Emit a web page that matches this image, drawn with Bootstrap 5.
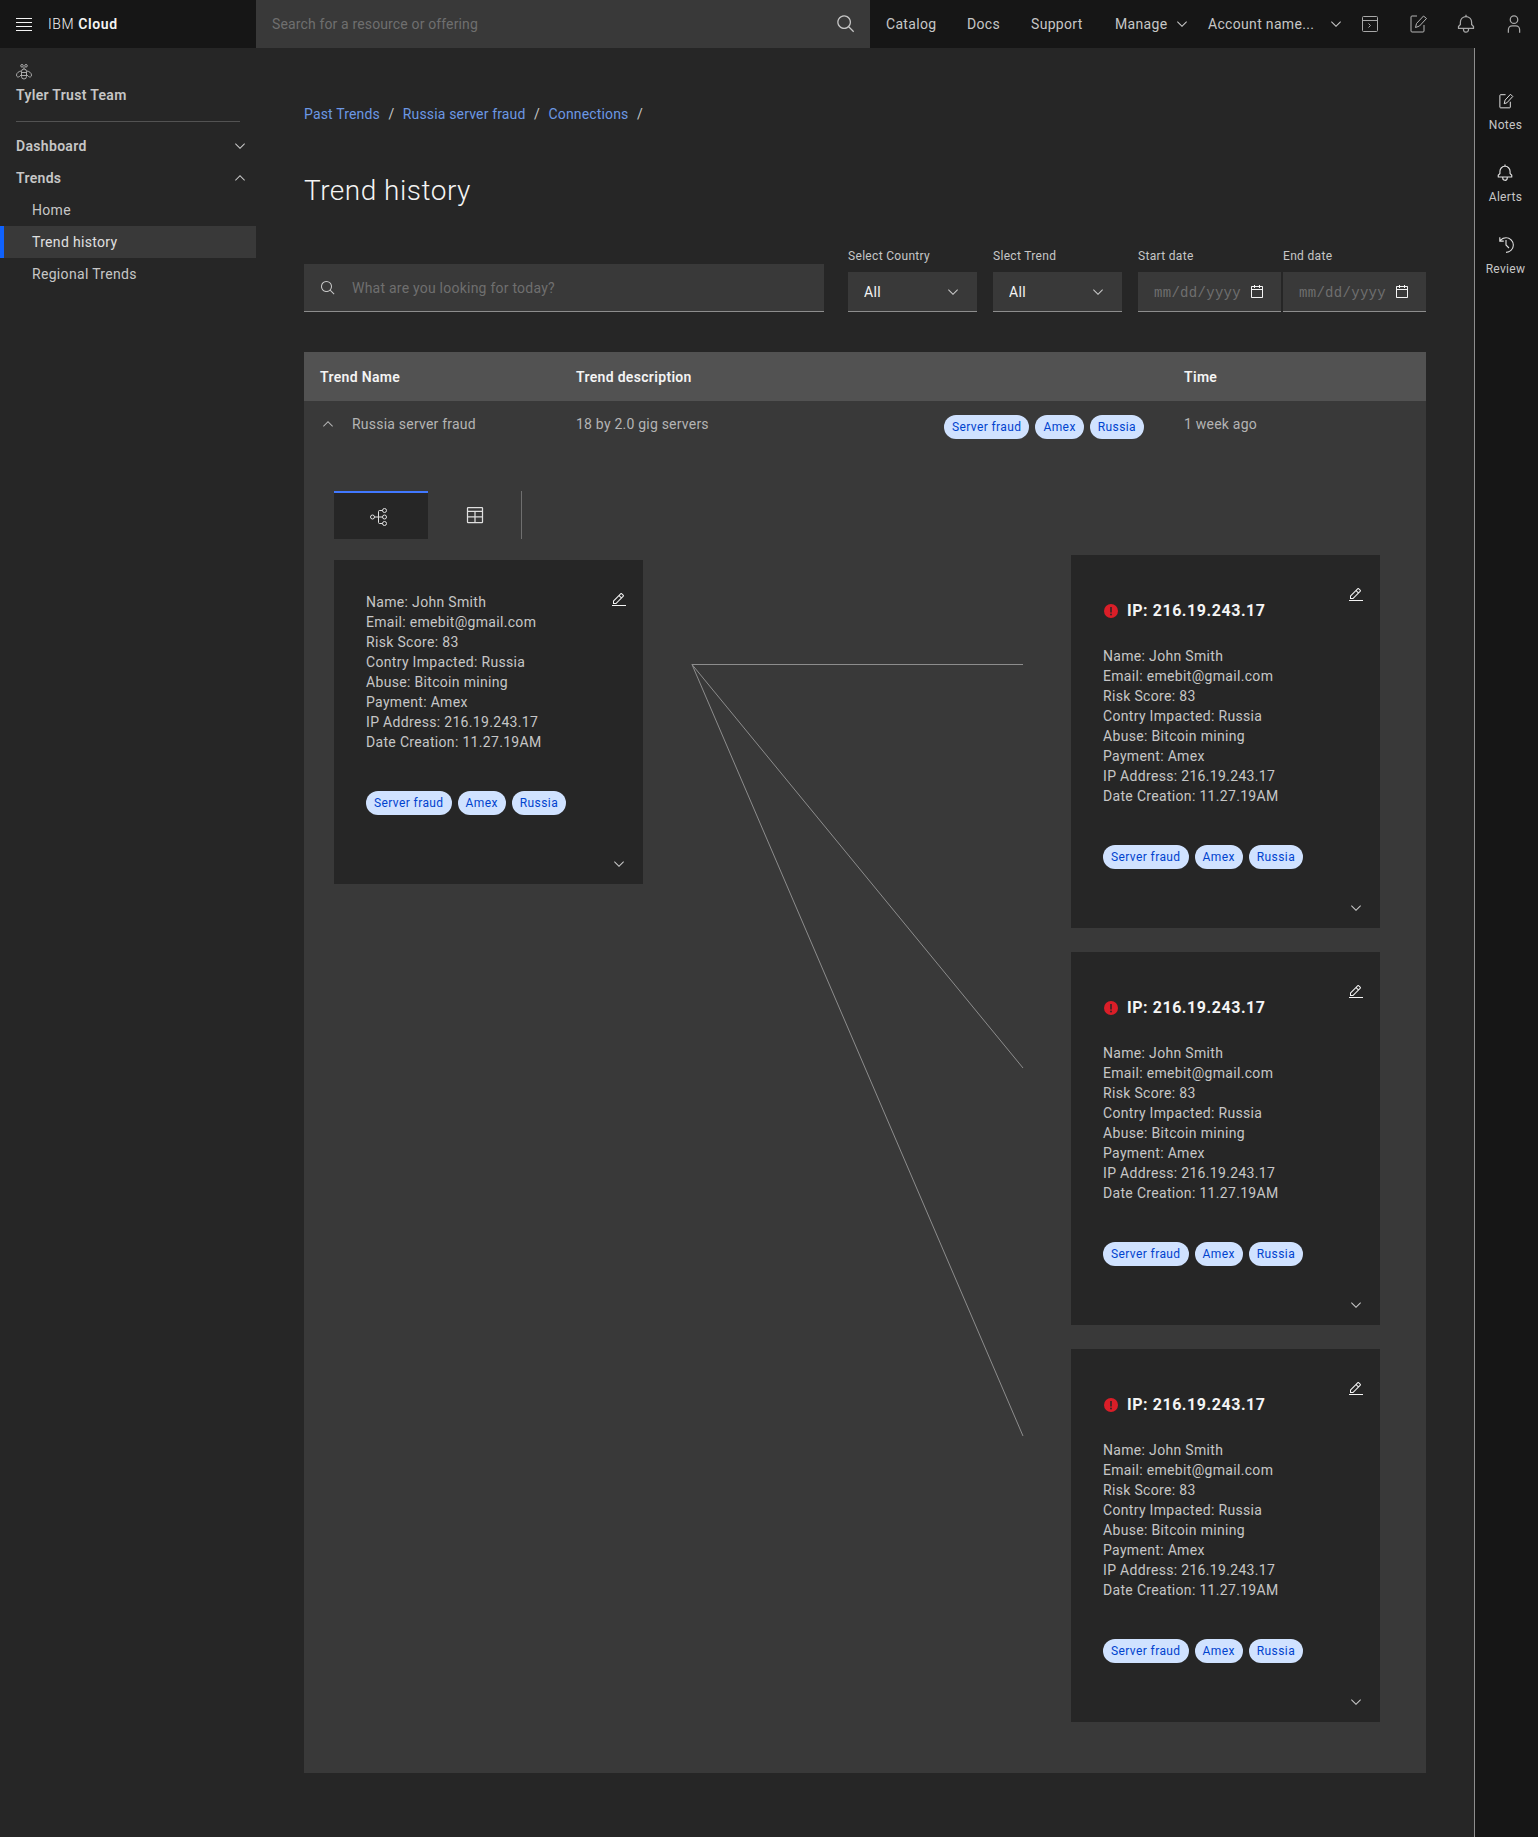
<!doctype html>
<html lang="en" data-bs-theme="dark">
<head>
<meta charset="utf-8">
<title>Trend history</title>
<link href="https://cdn.jsdelivr.net/npm/bootstrap@5.3.0/dist/css/bootstrap.min.css" rel="stylesheet">
<style>
:root{--pf:"Roboto","Liberation Sans",sans-serif;}
html,body{height:100%}
body{background:#262626;color:#c6c6c6;font-family:var(--pf);font-size:14px;line-height:20px;letter-spacing:.32px;width:1538px;min-height:1837px;}
svg.ic{fill:currentColor;display:block;flex:none}
svg.ic.ln{fill:none}
.topbar{height:48px;background:#161616;}
.brandbox{width:256px;padding-left:16px;color:#f4f4f4}
.brandbox b{font-weight:600}
.brandname{margin-left:16px;font-weight:300;letter-spacing:.6px}
.topsearch{width:614px;background:#393939;color:#6f6f6f;padding:0 14px 0 16px;letter-spacing:.14px}
.topsearch svg{color:#c6c6c6}
.toplinks{color:#c6c6c6;height:48px}
.navgrp{width:668px;position:relative;height:48px}
.navgrp>*{position:absolute;top:14px}
.shell{min-height:1789px}
.sidemenu{width:256px;flex:none;padding-top:16px}
.teamicon{margin-left:16px;color:#c6c6c6}
.teamname{margin:4px 0 0 16px;font-weight:600;height:37px;color:#c6c6c6;line-height:22px}
.siderule{margin:0 16px 8px;border-top:1px solid #525252;opacity:1}
.sideitem{height:32px;padding:0 16px;font-weight:600;color:#c6c6c6}
.subitem{height:32px;padding-left:32px;color:#c6c6c6}
.subitem.on{background:#393939;border-left:4px solid #0f62fe;padding-left:28px;color:#e0e0e0}
.mainarea{flex:1;padding:56px 48px 0;min-width:0}
.crumbs{--bs-breadcrumb-margin-bottom:0;--bs-breadcrumb-item-padding-x:8.5px;height:20px;letter-spacing:.16px}
.crumbs .breadcrumb-item+.breadcrumb-item::before{color:#c6c6c6}
.crumbs a{color:#6c98e4;text-decoration:none}
.pagetitle{font-size:28px;font-weight:300;line-height:36px;color:#f4f4f4;margin:49px 0 0;letter-spacing:.5px}
.filters{margin-top:39px;height:64px}
.findbox{width:520px;flex:none;height:48px;background:#393939;border-bottom:1px solid #8d8d8d;padding-left:16px;color:#c6c6c6;margin-right:24px}
.findbox input,.datebox input{background:transparent;border:0;outline:0;color:#c6c6c6;padding:0;width:100%;min-width:0}
.findbox input{letter-spacing:.23px}
.findbox input::placeholder{color:#6f6f6f}
.fieldgrp{display:flex;flex-direction:column;justify-content:flex-end;flex:none}
.fieldlabel{font-size:12px;line-height:16px;margin-bottom:8px;color:#c6c6c6;letter-spacing:.32px}
.fieldsel{height:40px;border:0;border-bottom:1px solid #8d8d8d;border-radius:0;background-color:#393939;color:#f4f4f4;font-size:14px;padding:2px 16px 0;letter-spacing:.32px;
 background-image:url("data:image/svg+xml,%3Csvg xmlns='http://www.w3.org/2000/svg' viewBox='0 0 32 32'%3E%3Cpath fill='%23c6c6c6' d='M16 22L6 12 7.4 10.6 16 19.2 24.6 10.6 26 12z'/%3E%3C/svg%3E");background-size:16px 16px;background-position:right 16px center}
.datebox{height:40px;background:#393939;border-bottom:1px solid #8d8d8d;padding:0 16px;color:#f4f4f4}
.datebox input{font-family:"Liberation Mono",monospace;font-size:14px;letter-spacing:.3px;padding-top:2px}
.datebox input::placeholder{color:#6f6f6f}
.trendtable{margin-top:40px;background:#393939;padding-bottom:51px}
.rowhead{height:49px;background:#525252;color:#f4f4f4;font-weight:600;position:relative}
.cola{width:272px;flex:none;padding-left:16px}
.colb{flex:none;width:608px}
.trendrow{height:90px;padding-top:13px;color:#b4b4b4;align-items:flex-start;letter-spacing:.22px}
.trendrow .cola,.trendrow .colb{display:flex;align-items:center;height:20px}
.pilla{display:inline-flex;align-items:center;height:24px;padding:0 8px;border-radius:12px;background:#d0e2ff;color:#0043ce;font-size:12px;line-height:16px;letter-spacing:.4px;font-weight:400}
.pillset{gap:6px}
.tabstrip{margin-left:30px;height:48px}
.tabon{width:94px;height:48px;background:#262626;border-top:2px solid #4178ff;color:#e0e0e0}
.tabon svg{margin:2px 5px 0 0}
.taboff{width:94px;height:48px;color:#e0e0e0;border-right:1px solid #6f6f6f}
.diagram{position:relative;padding:16px 46px 0 30px}
.linkarrows{position:absolute;left:0;top:0;width:100%;height:100%;pointer-events:none}
.personcard{width:309px;background:#262626;padding:32px 32px 0;position:relative;color:#c6c6c6;line-height:20px}
.personcard.leftcard{margin-top:5px;height:324px}
.personcard.ipcard{height:373px;margin-bottom:24px;padding-top:45px}
.personcard.ipcard:last-child{margin-bottom:0}
.editbtn{position:absolute;right:16px;color:#f4f4f4;top:32px}
.morebtn{position:absolute;right:16px;bottom:12px;color:#c6c6c6}
.ipline{font-size:16px;font-weight:700;color:#f4f4f4;line-height:22px;gap:9px;margin-bottom:24px;margin-left:1px;letter-spacing:.55px}
.factlines{margin-bottom:39px}
.factlines div{height:20px;white-space:nowrap}
.rightrail{width:64px;flex:none;background:#161616;border-left:1px solid #8d8d8d;position:relative;padding:44px 2px 0 0;color:#c6c6c6}
.railitem{height:72px;font-size:12px;line-height:16px;letter-spacing:.32px}
.railitem svg{margin-bottom:7px;color:#e0e0e0}
</style>
</head>
<body>
<header class="topbar d-flex align-items-stretch">
  <div class="brandbox d-flex align-items-center">
    <svg class="ic ln" width="16" height="16" viewBox="0 0 16 16" stroke="currentColor"><path d="M0 2.500h16M0 6.500h16M0 10.500h16M0 14.500h16"/></svg>
    <span class="brandname">IBM <b>Cloud</b></span>
  </div>
  <div class="topsearch d-flex align-items-center justify-content-between">
    <span>Search for a resource or offering</span>
    <svg class="ic" width="20" height="20" viewBox="0 0 32 32"><path d="M29 27.5859l-7.5521-7.5521a11.0177 11.0177 0 10-1.4141 1.4141L27.5859 29zM4 13a9 9 0 119 9A9.01 9.01 0 014 13z"/></svg>
  </div>
  <nav class="navgrp toplinks">
    <span style="left:16px">Catalog</span>
    <span style="left:97px">Docs</span>
    <span style="left:161px">Support</span>
    <span style="left:245px">Manage</span>
    <svg class="ic" style="left:304px;top:16px" width="16" height="16" viewBox="0 0 32 32"><path d="M16 22L6 12 7.4 10.6 16 19.2 24.6 10.6 26 12z"/></svg>
    <span style="left:338px">Account name...</span>
    <svg class="ic" style="left:458px;top:16px" width="16" height="16" viewBox="0 0 32 32"><path d="M16 22L6 12 7.4 10.6 16 19.2 24.6 10.6 26 12z"/></svg>
    <svg class="ic ln" style="left:490px;top:14px;color:#a8a8a8" width="20" height="20" viewBox="0 0 20 20" stroke="currentColor"><rect x="2.500" y="2.500" width="15" height="15" rx="1"/><path d="M2.500 6.500h15M8.500 9.500l2 2-2 2"/></svg>
    <svg class="ic ln" style="left:538px;top:14px;color:#b4b4b4" width="20" height="20" viewBox="0 0 20 20" stroke="currentColor"><path d="M9 2H4a1 1 0 00-1 1v14a1 1 0 001 1h11a1 1 0 001-1v-6"/><path d="M7.500 13.500l1-4 7-7.500 3 2.500-7 7.500z"/></svg>
    <svg class="ic" style="left:586px;top:14px;color:#a8a8a8" width="20" height="20" viewBox="0 0 32 32"><path d="M28.7071,19.293,26,16.5859V13a10.0136,10.0136,0,0,0-9-9.9492V1H15V3.0508A10.0136,10.0136,0,0,0,6,13v3.5859L3.2929,19.293A1,1,0,0,0,3,20v3a1,1,0,0,0,1,1h7v.7768a5.152,5.152,0,0,0,4.5,5.1987A5.0057,5.0057,0,0,0,21,25V24h7a1,1,0,0,0,1-1V20A1,1,0,0,0,28.7071,19.293ZM19,25a3,3,0,0,1-6,0V24h6Zm8-3H5V20.4141L7.707,17.707A1,1,0,0,0,8,17V13a8,8,0,0,1,16,0v4a1,1,0,0,0,.293.707L27,20.4141Z"/></svg>
    <svg class="ic" style="left:634px;top:14px;color:#a8a8a8" width="20" height="20" viewBox="0 0 32 32"><path d="M16 4a5 5 0 11-5 5 5 5 0 015-5m0-2a7 7 0 107 7A7 7 0 0016 2zM26 30H24V25a5 5 0 00-5-5H13a5 5 0 00-5 5v5H6V25a7 7 0 017-7h6a7 7 0 017 7z"/></svg>
  </nav>
</header>
<div class="shell d-flex">
  <aside class="sidemenu">
    <svg class="ic ln teamicon" width="16" height="16" viewBox="0 0 16 16" stroke="currentColor" stroke-width=".8"><circle cx="6" cy="1.800" r="1.300"/><circle cx="10" cy="1.800" r="1.300"/><rect x="5.500" y="5" width="5" height="10" rx="2.500"/><path d="M5.500 8.500h5M5.500 11.500h5M8 3v2"/><path d="M5.500 7C3 7 .5 9 .5 11s1.500 2.500 3 1.500l2-2M10.500 7c2.500 0 5 2 5 4s-1.500 2.500-3 1.500l-2-2"/></svg>
    <div class="teamname">Tyler Trust Team</div>
    <hr class="siderule">
    <div class="sideitem d-flex align-items-center justify-content-between"><span>Dashboard</span><svg class="ic" width="16" height="16" viewBox="0 0 32 32" style="margin-right:-8px"><path d="M16 22L6 12 7.4 10.6 16 19.2 24.6 10.6 26 12z"/></svg></div>
    <div class="sideitem d-flex align-items-center justify-content-between"><span>Trends</span><svg class="ic" width="16" height="16" viewBox="0 0 32 32" style="margin-right:-8px"><path d="M16 10L26 20 24.6 21.4 16 12.800 7.400 21.400 6 20z"/></svg></div>
    <div class="subitem d-flex align-items-center">Home</div>
    <div class="subitem on d-flex align-items-center">Trend history</div>
    <div class="subitem d-flex align-items-center">Regional Trends</div>
  </aside>
  <main class="mainarea">
    <nav aria-label="breadcrumb">
      <ol class="breadcrumb crumbs">
        <li class="breadcrumb-item"><a href="#">Past Trends</a></li>
        <li class="breadcrumb-item"><a href="#">Russia server fraud</a></li>
        <li class="breadcrumb-item"><a href="#">Connections</a></li>
        <li class="breadcrumb-item"></li>
      </ol>
    </nav>
    <h1 class="pagetitle">Trend history</h1>
    <div class="filters d-flex align-items-end">
      <div class="findbox d-flex align-items-center gap-2">
        <svg class="ic" width="16" height="16" viewBox="0 0 32 32"><path d="M29 27.5859l-7.5521-7.5521a11.0177 11.0177 0 10-1.4141 1.4141L27.5859 29zM4 13a9 9 0 119 9A9.01 9.01 0 014 13z"/></svg>
        <input type="text" placeholder="What are you looking for today?" style="margin-left:8px">
      </div>
      <div class="fieldgrp" style="width:129px"><label class="fieldlabel">Select Country</label><select class="form-select fieldsel"><option>All</option></select></div>
      <div class="fieldgrp" style="width:129px;margin-left:16px"><label class="fieldlabel">Slect Trend</label><select class="form-select fieldsel"><option>All</option></select></div>
      <div class="fieldgrp" style="width:143px;margin-left:16px"><label class="fieldlabel">Start date</label><div class="datebox d-flex align-items-center"><input type="text" placeholder="mm/dd/yyyy"><svg class="ic" width="16" height="16" viewBox="0 0 32 32"><path d="M26,4h-4V2h-2v2h-8V2h-2v2H6C4.900,4,4,4.900,4,6v20c0,1.100,0.900,2,2,2h20c1.100,0,2-0.900,2-2V6C28,4.900,27.100,4,26,4z M26,26H6V12h20V26z M26,10H6V6h4v2h2V6h8v2h2V6h4V10z"/></svg></div></div>
      <div class="fieldgrp" style="width:143px;margin-left:2px"><label class="fieldlabel">End date</label><div class="datebox d-flex align-items-center"><input type="text" placeholder="mm/dd/yyyy"><svg class="ic" width="16" height="16" viewBox="0 0 32 32"><path d="M26,4h-4V2h-2v2h-8V2h-2v2H6C4.900,4,4,4.900,4,6v20c0,1.100,0.900,2,2,2h20c1.100,0,2-0.900,2-2V6C28,4.900,27.100,4,26,4z M26,26H6V12h20V26z M26,10H6V6h4v2h2V6h8v2h2V6h4V10z"/></svg></div></div>
    </div>
    <section class="trendtable">
      <div class="rowhead d-flex align-items-center">
        <div class="cola">Trend Name</div>
        <div class="colb">Trend description</div>
        <div>Time</div>
      </div>
      <div class="trendrow d-flex">
        <div class="cola"><svg class="ic" width="16" height="16" viewBox="0 0 32 32" style="margin-right:16px"><path d="M16 10L26 20 24.600 21.400 16 12.800 7.400 21.400 6 20z"/></svg>Russia server fraud</div>
        <div class="colb justify-content-between"><span>18 by 2.0 gig servers</span><span class="d-flex pillset" style="margin-right:40px;margin-top:6px"><span class="pilla">Server fraud</span><span class="pilla">Amex</span><span class="pilla">Russia</span></span></div>
        <div>1 week ago</div>
      </div>
      <div class="tabstrip d-flex">
        <div class="tabon d-flex align-items-center justify-content-center">
          <svg class="ic ln" width="20" height="20" viewBox="0 0 20 20" stroke="currentColor"><circle cx="3.500" cy="10" r="2"/><circle cx="15.500" cy="3.500" r="2"/><circle cx="15.500" cy="10" r="2"/><circle cx="15.500" cy="16.500" r="2"/><path d="M5.500 10h8M9.500 10V4.500c0-.6.400-1 1-1h3M9.500 10v5.500c0 .6.400 1 1 1h3"/></svg>
        </div>
        <div class="taboff d-flex align-items-center justify-content-center">
          <svg class="ic" width="20" height="20" viewBox="0 0 32 32"><path d="M27,3H5A2,2,0,0,0,3,5V27a2,2,0,0,0,2,2H27a2,2,0,0,0,2-2V5A2,2,0,0,0,27,3Zm0,2V9H5V5ZM17,11H27v7H17Zm-2,7H5V11H15ZM5,20H15v7H5Zm12,7V20H27v7Z"/></svg>
        </div>
      </div>
      <div class="diagram d-flex justify-content-between align-items-start">
        <svg class="linkarrows" viewBox="0 0 1122 1183" preserveAspectRatio="none" fill="none" stroke="#8d8d8d" stroke-width="1"><path d="M388 125.500H719M388 125.500L719 529M388 125.500L719 897"/></svg>
        <article class="personcard leftcard">
          <svg class="ic editbtn" width="16" height="16" viewBox="0 0 32 32"><path d="M2 26H30V28H2zM25.400 9c.8-.8.8-2 0-2.800l-3.600-3.600c-.8-.8-2-.8-2.800 0l-15 15V24h6.400L25.400 9zM20.400 4L24 7.600l-3 3L17.400 7 20.400 4zM6 22v-3.600l10-10 3.600 3.600-10 10H6z"/></svg>
          <div class="factlines">
            <div>Name: John Smith</div><div>Email: emebit@gmail.com</div><div>Risk Score: 83</div><div>Contry Impacted: Russia</div><div>Abuse: Bitcoin mining</div><div>Payment: Amex</div><div>IP Address: 216.19.243.17</div><div>Date Creation: 11.27.19AM</div>
          </div>
          <div class="d-flex pillset"><span class="pilla">Server fraud</span><span class="pilla">Amex</span><span class="pilla">Russia</span></div>
          <svg class="ic morebtn" width="16" height="16" viewBox="0 0 32 32"><path d="M16 22L6 12 7.400 10.600 16 19.200 24.600 10.600 26 12z"/></svg>
        </article>
        <div class="ipstack">
          <article class="personcard ipcard">
            <svg class="ic editbtn" width="16" height="16" viewBox="0 0 32 32"><path d="M2 26H30V28H2zM25.400 9c.8-.8.8-2 0-2.800l-3.600-3.600c-.8-.8-2-.8-2.800 0l-15 15V24h6.400L25.400 9zM20.400 4L24 7.600l-3 3L17.400 7 20.400 4zM6 22v-3.600l10-10 3.600 3.600-10 10H6z"/></svg>
            <div class="ipline d-flex align-items-center"><svg class="ic" width="14" height="14" viewBox="2 2 28 28"><circle cx="16" cy="16" r="14" fill="#da1e28"/><rect x="14.500" y="8" width="3" height="11" fill="#262626"/><circle cx="16" cy="23" r="1.800" fill="#262626"/></svg><span>IP: 216.19.243.17</span></div>
            <div class="factlines">
              <div>Name: John Smith</div><div>Email: emebit@gmail.com</div><div>Risk Score: 83</div><div>Contry Impacted: Russia</div><div>Abuse: Bitcoin mining</div><div>Payment: Amex</div><div>IP Address: 216.19.243.17</div><div>Date Creation: 11.27.19AM</div>
            </div>
            <div class="d-flex pillset"><span class="pilla">Server fraud</span><span class="pilla">Amex</span><span class="pilla">Russia</span></div>
            <svg class="ic morebtn" width="16" height="16" viewBox="0 0 32 32"><path d="M16 22L6 12 7.400 10.600 16 19.200 24.600 10.600 26 12z"/></svg>
          </article>
          <article class="personcard ipcard">
            <svg class="ic editbtn" width="16" height="16" viewBox="0 0 32 32"><path d="M2 26H30V28H2zM25.400 9c.8-.8.8-2 0-2.800l-3.600-3.600c-.8-.8-2-.8-2.800 0l-15 15V24h6.400L25.400 9zM20.400 4L24 7.600l-3 3L17.400 7 20.400 4zM6 22v-3.600l10-10 3.600 3.600-10 10H6z"/></svg>
            <div class="ipline d-flex align-items-center"><svg class="ic" width="14" height="14" viewBox="2 2 28 28"><circle cx="16" cy="16" r="14" fill="#da1e28"/><rect x="14.500" y="8" width="3" height="11" fill="#262626"/><circle cx="16" cy="23" r="1.800" fill="#262626"/></svg><span>IP: 216.19.243.17</span></div>
            <div class="factlines">
              <div>Name: John Smith</div><div>Email: emebit@gmail.com</div><div>Risk Score: 83</div><div>Contry Impacted: Russia</div><div>Abuse: Bitcoin mining</div><div>Payment: Amex</div><div>IP Address: 216.19.243.17</div><div>Date Creation: 11.27.19AM</div>
            </div>
            <div class="d-flex pillset"><span class="pilla">Server fraud</span><span class="pilla">Amex</span><span class="pilla">Russia</span></div>
            <svg class="ic morebtn" width="16" height="16" viewBox="0 0 32 32"><path d="M16 22L6 12 7.400 10.600 16 19.200 24.600 10.600 26 12z"/></svg>
          </article>
          <article class="personcard ipcard">
            <svg class="ic editbtn" width="16" height="16" viewBox="0 0 32 32"><path d="M2 26H30V28H2zM25.400 9c.8-.8.8-2 0-2.800l-3.600-3.600c-.8-.8-2-.8-2.800 0l-15 15V24h6.400L25.400 9zM20.400 4L24 7.600l-3 3L17.400 7 20.400 4zM6 22v-3.600l10-10 3.600 3.600-10 10H6z"/></svg>
            <div class="ipline d-flex align-items-center"><svg class="ic" width="14" height="14" viewBox="2 2 28 28"><circle cx="16" cy="16" r="14" fill="#da1e28"/><rect x="14.500" y="8" width="3" height="11" fill="#262626"/><circle cx="16" cy="23" r="1.800" fill="#262626"/></svg><span>IP: 216.19.243.17</span></div>
            <div class="factlines">
              <div>Name: John Smith</div><div>Email: emebit@gmail.com</div><div>Risk Score: 83</div><div>Contry Impacted: Russia</div><div>Abuse: Bitcoin mining</div><div>Payment: Amex</div><div>IP Address: 216.19.243.17</div><div>Date Creation: 11.27.19AM</div>
            </div>
            <div class="d-flex pillset"><span class="pilla">Server fraud</span><span class="pilla">Amex</span><span class="pilla">Russia</span></div>
            <svg class="ic morebtn" width="16" height="16" viewBox="0 0 32 32"><path d="M16 22L6 12 7.400 10.600 16 19.200 24.600 10.600 26 12z"/></svg>
          </article>
        </div>
      </div>
    </section>
  </main>
  <aside class="rightrail d-flex flex-column align-items-center">
    <div class="railitem d-flex flex-column align-items-center"><svg class="ic ln" width="18" height="18" viewBox="0 0 20 20" stroke="currentColor" stroke-width="1.100"><path d="M9.500 3H4a.8.8 0 00-.8.800v13a.8.8 0 00.800.800h10a.8.8 0 00.800-.800v-6"/><path d="M8 13l1-4 6-6.500 2.500 2.500L11 12z"/></svg>Notes</div>
    <div class="railitem d-flex flex-column align-items-center"><svg class="ic" width="18" height="18" viewBox="0 0 32 32"><path d="M28.7071,19.293,26,16.5859V13a10.0136,10.0136,0,0,0-9-9.9492V1H15V3.0508A10.0136,10.0136,0,0,0,6,13v3.5859L3.2929,19.293A1,1,0,0,0,3,20v3a1,1,0,0,0,1,1h7v.7768a5.152,5.152,0,0,0,4.5,5.1987A5.0057,5.0057,0,0,0,21,25V24h7a1,1,0,0,0,1-1V20A1,1,0,0,0,28.7071,19.293ZM19,25a3,3,0,0,1-6,0V24h6Zm8-3H5V20.4141L7.707,17.707A1,1,0,0,0,8,17V13a8,8,0,0,1,16,0v4a1,1,0,0,0,.293.707L27,20.4141Z"/></svg>Alerts</div>
    <div class="railitem d-flex flex-column align-items-center"><svg class="ic" width="18" height="18" viewBox="0 0 32 32"><path d="M20.590 22L15 16.410V7H17V15.580L22 20.590 20.590 22z"/><path d="M16 2A13.940 13.940 0 006 6.230V2H4v8h8V8H7.080A12 12 0 1116 28V30A14 14 0 0016 2z"/></svg>Review</div>
  </aside>
</div>
<script src="https://cdn.jsdelivr.net/npm/bootstrap@5.3.0/dist/js/bootstrap.bundle.min.js"></script>
</body>
</html>
